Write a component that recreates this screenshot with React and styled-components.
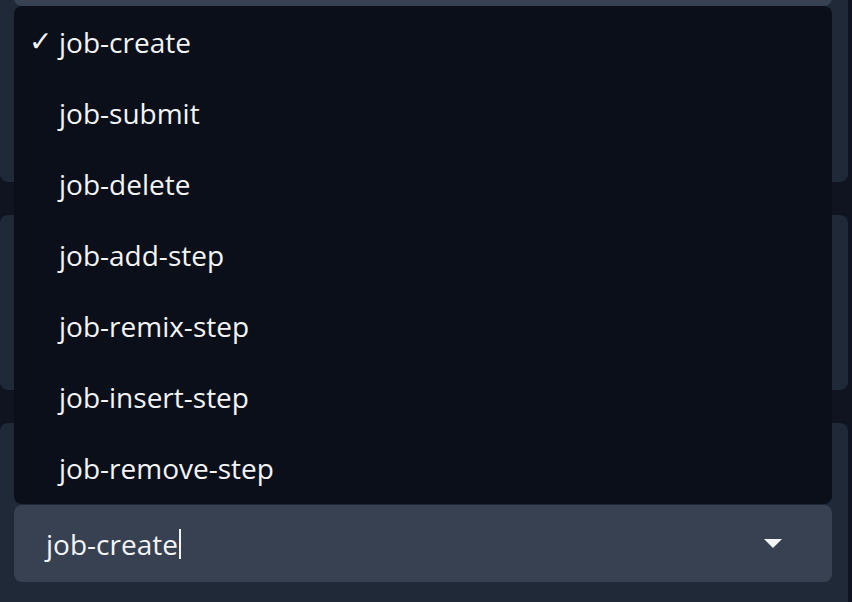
import React, { useState } from "react";
import styled, { createGlobalStyle } from "styled-components";

const options = [
  "job-create",
  "job-submit",
  "job-delete",
  "job-add-step",
  "job-remix-step",
  "job-insert-step",
  "job-remove-step",
];

const GlobalStyle = createGlobalStyle`
  html, body {
    margin: 0;
    background: #0f1420;
  }
  #root {
    width: 852px;
    height: 602px;
    overflow: hidden;
    position: relative;
  }
`;

function App() {
  const [value] = useState("job-create");

  return (
    <>
      <GlobalStyle />
      <Page>
        <Panel height={272}>
          <Field />
        </Panel>
        <Panel height={175} />
        <Panel height={200}>
          <Label />
          <Select>
            <SelectText>
              {value}
              <Caret />
            </SelectText>
            <Arrow viewBox="0 0 18 10">
              <path d="M0 0 H18 L9 9 Z" fill="#f3f4f6" />
            </Arrow>
          </Select>
        </Panel>
      </Page>
      <Menu>
        {options.map((opt) => (
          <Option key={opt}>
            <Check>{opt === value ? "✓" : ""}</Check>
            {opt}
          </Option>
        ))}
      </Menu>
    </>
  );
}

const Page = styled.div`
  display: flex;
  flex-direction: column;
  gap: 33px;
  margin-top: -90px;
  padding-right: 4px;
`;

const Panel = styled.section`
  height: ${(p) => p.height}px;
  background: #1f2937;
  border-radius: 8px;
  padding: 19px 16px 0 14px;
  box-sizing: border-box;
  display: flex;
  flex-direction: column;
`;

const Field = styled.div`
  height: 77px;
  background: #374151;
  border-radius: 8px;
`;

const Label = styled.div`
  height: 63px;
`;

const Select = styled.div`
  height: 77px;
  background: #374151;
  border-radius: 8px;
  display: flex;
  align-items: center;
  justify-content: space-between;
  padding: 0 50px 0 32px;
  font-family: "Open Sans", "Noto Sans", sans-serif;
  font-size: 28px;
  color: #f3f4f6;
`;

const SelectText = styled.span`
  display: flex;
  align-items: center;
`;

const Caret = styled.span`
  display: inline-block;
  width: 2px;
  height: 30px;
  background: #f3f4f6;
  margin-left: 1px;
`;

const Arrow = styled.svg`
  width: 18px;
  height: 10px;
`;

const Menu = styled.ul`
  position: absolute;
  top: 6px;
  left: 14px;
  width: 818px;
  margin: 0;
  padding: 0 0 1px;
  list-style: none;
  background: #0b0f19;
  border-radius: 8px;
  font-family: "Open Sans", "Noto Sans", sans-serif;
  font-size: 28px;
  color: #f3f4f6;
`;

const Option = styled.li`
  height: 71px;
  display: flex;
  align-items: center;
  padding-left: 15px;
`;

const Check = styled.span`
  width: 30px;
  font-size: 28px;
  font-weight: bold;
  font-family: "DejaVu Sans", sans-serif;
  line-height: 1;
`;

export default App;
